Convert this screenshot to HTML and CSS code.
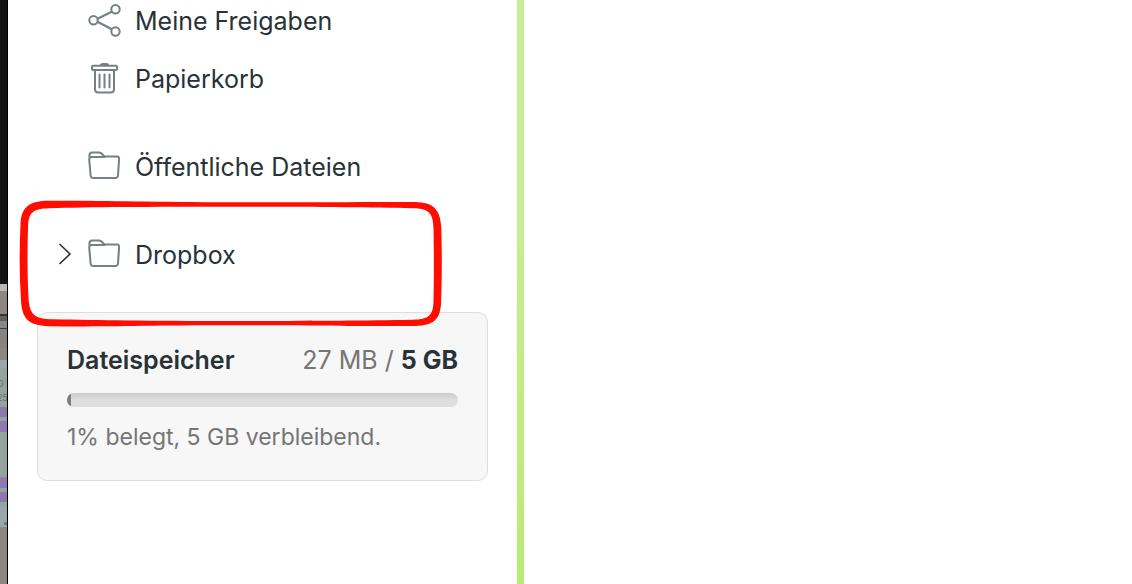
FILE: index.html
```html
<!DOCTYPE html>
<html lang="de">
<head>
    <meta charset="UTF-8">
    <meta name="viewport" content="width=device-width, initial-scale=1.0">
    <title>Dateien</title>
    <link rel="stylesheet" href="styles.css">
</head>
<body>
    <!-- Icons used more than once -->
    <svg class="symbols" aria-hidden="true">
        <symbol id="icon-folder" viewBox="0 0 34 34">
            <path d="M2.500 9V5Q2.500 2.500 5 2.500H12Q13.500 2.500 14.500 3.500L17.500 6.500H30Q32.300 6.500 32.100 9L31 25.500Q30.800 28 28.300 28H6.300Q3.800 28 3.600 25.500L2.200 9.500Q2.100 7 4.500 7H17.500"/>
        </symbol>
    </svg>

    <div class="page">
        <div class="backdrop" aria-hidden="true">
            <svg width="7" height="584" viewBox="0 0 7 584">
                <rect width="7" height="284" fill="#141414"/>
                <rect y="284" width="7" height="7" fill="#b9b9b7"/>
                <rect y="291" width="7" height="293" fill="#8d8783"/>
                <rect y="314" width="7" height="2" fill="#343437"/>
                <rect y="316" width="7" height="5" fill="#616161"/>
                <rect y="321" width="7" height="7" fill="#88888a"/>
                <rect y="328" width="7" height="1" fill="#414145"/>
                <rect y="329" width="7" height="19" fill="#858480"/>
                <rect y="360" width="7" height="167" fill="#94a3a0"/>
                <rect y="360" width="7" height="8" fill="#98a7ac"/>
                <rect y="407" width="7" height="10" fill="#8c78ab"/>
                <rect y="421" width="7" height="11" fill="#8e7bb1"/>
                <rect y="477" width="7" height="11" fill="#8e7bb1"/>
                <rect y="492" width="7" height="10" fill="#8c78ab"/>
                <rect y="507" width="7" height="20" fill="#98a7ac"/>
                <rect x="4" y="522" width="3" height="3" fill="#607f9f"/>
                <text x="-2" y="387">0</text>
                <text x="-3" y="401">25</text>
            </svg>
        </div>

        <aside class="sidebar">
            <nav>
                <ul class="nav-list">
                    <li class="nav-item">
                        <a class="nav-link" href="#freigaben">
                            <svg class="icon" viewBox="0 0 34 34">
                                <path d="M11 14.500 24.300 8M11 18 24.300 25"/>
                                <circle cx="6.500" cy="16.300" r="4.200"/>
                                <circle cx="28.500" cy="5.200" r="4.200"/>
                                <circle cx="28.500" cy="27.500" r="4.200"/>
                            </svg>
                            <span>Meine Freigaben</span>
                        </a>
                    </li>
                    <li class="nav-item">
                        <a class="nav-link" href="#papierkorb">
                            <svg class="icon" viewBox="0 0 34 34">
                                <path d="M14 3Q14 2 16 2H19Q21 2 21 3Z" fill="currentColor"/>
                                <rect x="5" y="3.800" width="25" height="4.200" rx="1"/>
                                <path d="M8 8.500V27Q8 30.500 11.500 30.500H23.500Q27 30.500 27 27V8.500M12.500 12.500V25.500M17.500 12.500V25.500M22.500 12.500V25.500"/>
                            </svg>
                            <span>Papierkorb</span>
                        </a>
                    </li>
                    <li class="nav-item separated">
                        <a class="nav-link" href="#oeffentlich">
                            <svg class="icon"><use href="#icon-folder"/></svg>
                            <span>Öffentliche Dateien</span>
                        </a>
                    </li>
                    <li class="nav-item separated">
                        <button class="toggle" type="button" aria-label="Dropbox aufklappen">
                            <svg width="14" height="22" viewBox="0 0 14 22"><path d="M1.500 1 12 11 1.500 21"/></svg>
                        </button>
                        <a class="nav-link" href="#dropbox">
                            <svg class="icon"><use href="#icon-folder"/></svg>
                            <span>Dropbox</span>
                        </a>
                        <svg class="marker" viewBox="0 0 424 128" aria-hidden="true">
                            <path fill-rule="evenodd" d="M30 .800C70 .300 130 2 210 2.300C290 2.600 350 1.600 396 2C414 2.300 421.500 9 422.300 28C423 50 423 82 422 104C421 119 415 125.500 396 126C340 126.500 290 125.300 210 125.300C130 125.300 80 127 34 126.300C11 126 3 121 2 100C.300 75 .300 50 1.500 25C2 7 10 1 30 .800Z
                                M30 8.300C70 7 130 6.800 210 6.800C290 6.800 350 7.600 394 8.200C409 8.600 414 12 414.500 28C415 50 415 80 414.500 101C414 116 410 119 394 119.800C340 120.800 290 121 210 121C130 121 80 120.300 34 119.300C16 119 10.500 115 9.500 98C8.300 75 8.300 50 9 28C9.500 13 13 8.800 30 8.300Z"/>
                        </svg>
                    </li>
                </ul>
            </nav>

            <section class="storage">
                <div class="storage-head">
                    <h2>Dateispeicher</h2>
                    <span class="storage-amount">27 MB / <strong>5 GB</strong></span>
                </div>
                <div class="bar" role="progressbar" aria-label="Dateispeicher" aria-valuenow="1" aria-valuemin="0" aria-valuemax="100">
                    <div class="bar-fill" style="width: 1%"></div>
                </div>
                <p>1% belegt, 5 GB verbleibend.</p>
            </section>
        </aside>

        <main class="content"></main>
    </div>
</body>
</html>
```

FILE: styles.css
```css
* { box-sizing: border-box; }
body { margin: 0; background: #fff; color: #283237; font-family: Inter, "Liberation Sans", sans-serif; font-size: 25px; line-height: 30px; }
.symbols { position: absolute; width: 0; height: 0; }
.page { display: flex; min-height: 100vh; overflow: hidden; }

/* Strip of the window behind */
.backdrop { flex: 0 0 8px; overflow: hidden; background: #8d8783; border-right: 1px solid #000; }
.backdrop svg { display: block; }
.backdrop text { font-size: 9px; fill: #656f70; }

/* Sidebar */
.sidebar { flex: 0 0 516px; padding: 0 29px; border-right: 7px solid #c0ed82; border-image: linear-gradient(#c5ee90 40%, #b8eb75) 1; border-width: 0 7px 0 0; }
.nav-list { margin: -8px 0 0; padding: 0; list-style: none; }
.nav-item { position: relative; display: flex; height: 58px; padding-left: 50px; }
.separated { margin-top: 30px; }
.nav-link { display: flex; align-items: center; gap: 14px; color: inherit; text-decoration: none; }
.icon { width: 34px; height: 34px; fill: none; stroke: #757f84; stroke-width: 2; stroke-linecap: round; stroke-linejoin: round; color: #757f84; }
.toggle { position: absolute; left: 21px; top: 17px; width: 14px; height: 22px; padding: 0; border: 0; background: none; cursor: pointer; }
.toggle svg { display: block; fill: none; stroke: #283237; stroke-width: 1.6; }
.marker { position: absolute; left: -18px; top: -26px; width: 424px; height: 128px; fill: #ff0d00; pointer-events: none; }

/* Storage box */
.storage { margin-top: 28px; padding: 32px 29px 28px; background: #f7f7f7; border: 1px solid #dedede; border-radius: 10px; }
.storage-head { display: flex; justify-content: space-between; }
.storage h2 { margin: 0; font-size: 25px; font-weight: 600; }
.storage-amount { color: #757575; }
.storage-amount strong { color: #283237; font-weight: 700; }
.bar { height: 14px; margin: 18px 0 15px; overflow: hidden; border-radius: 7px; background: linear-gradient(#cbcbcb, #dedede 50%); }
.bar-fill { height: 100%; background: #757f84; }
.storage p { margin: 0; color: #757575; font-size: 23px; }
.content { flex: 1; }
```
